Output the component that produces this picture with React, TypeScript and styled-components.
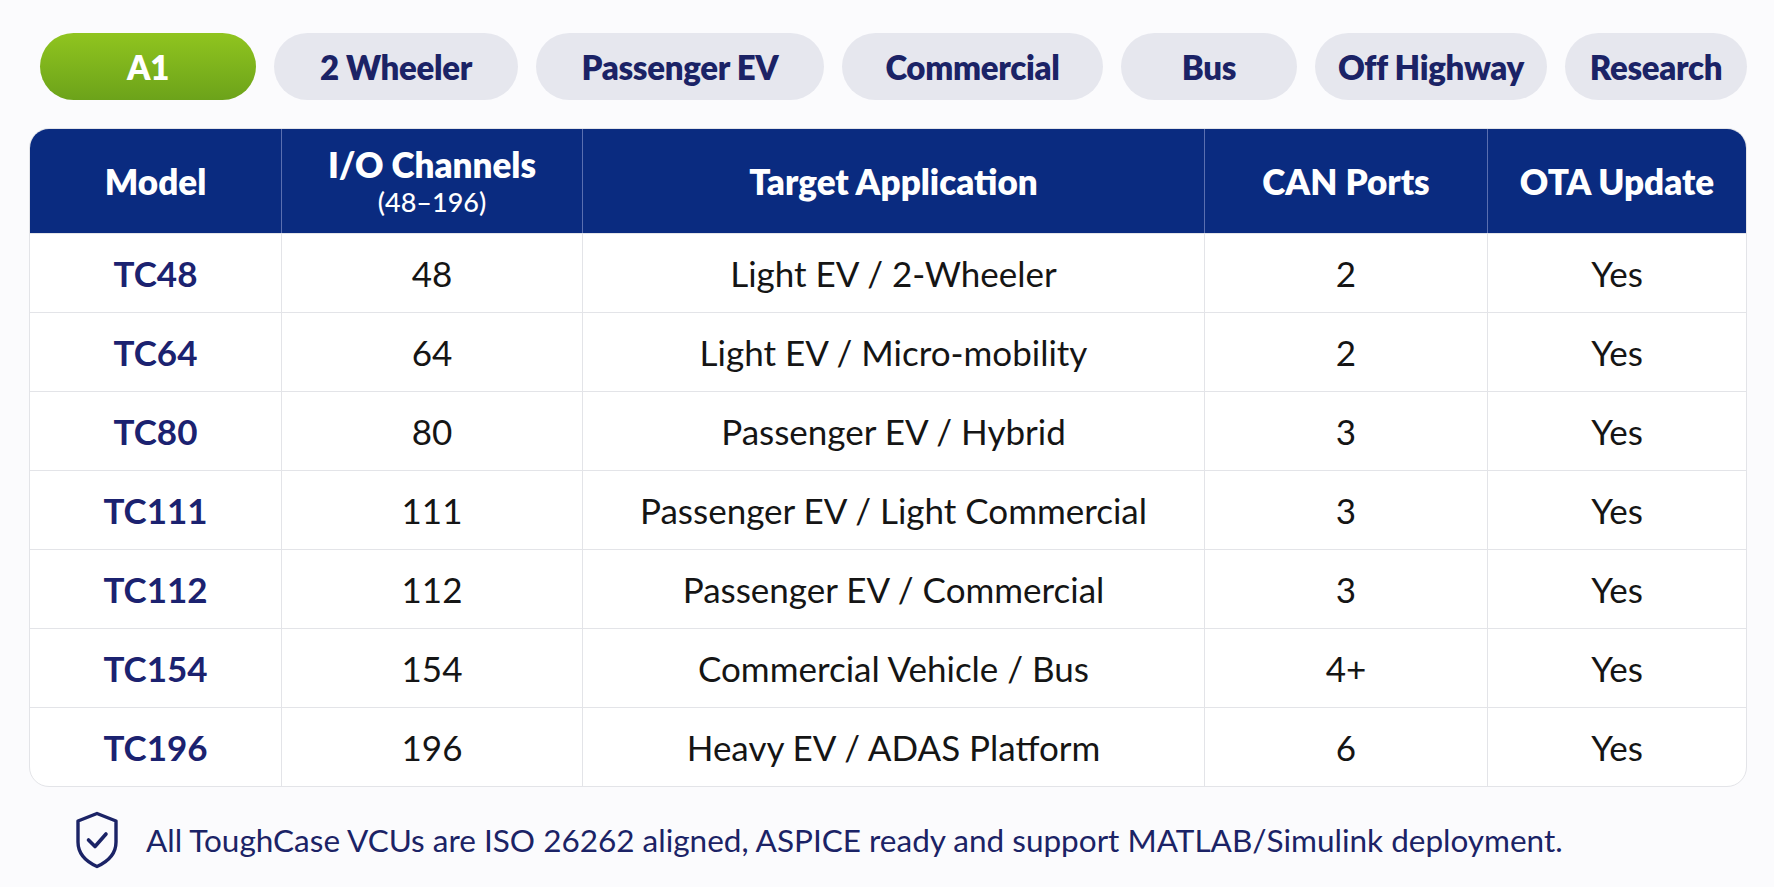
import styled, { createGlobalStyle } from 'styled-components';

const GlobalStyle = createGlobalStyle`
  html, body {
    margin: 0;
    padding: 0;
    background: #fbfbfd;
  }
  body {
    font-family: Lato, 'Open Sans', sans-serif;
    color: #151515;
  }
`;

const Page = styled.div`
  width: 1774px;
  height: 887px;
  box-sizing: border-box;
  padding: 33px 0 0 29px;
`;

const Tabs = styled.div`
  display: flex;
  gap: 18px;
  padding-left: 11px;
`;

const Tab = styled.button<{ $active?: boolean; $w: number }>`
  width: ${(p) => p.$w}px;
  height: 67px;
  border: none;
  border-radius: 34px;
  padding: 0;
  font-family: Lato, sans-serif;
  font-weight: 800;
  font-size: 33px;
  letter-spacing: -0.3px;
  cursor: pointer;
  color: ${(p) => (p.$active ? '#ffffff' : '#1b2366')};
  background: ${(p) =>
    p.$active ? 'linear-gradient(180deg, #90c41f 0%, #6ca31a 100%)' : '#e6e7ee'};
`;

const Table = styled.div`
  margin-top: 28px;
  width: 1716px;
  border: 1px solid #e3e4e8;
  border-radius: 20px;
  overflow: hidden;
  background: #ffffff;
  display: grid;
  grid-template-columns: 251px 301px 622px 283px 1fr;
`;

const HeadCell = styled.div`
  background: #0a2b80;
  color: #ffffff;
  height: 104px;
  display: flex;
  flex-direction: column;
  align-items: center;
  justify-content: center;
  font-weight: 800;
  font-size: 35px;
  line-height: 1.1;
  border-left: 1px solid #5a6fb0;
  &:first-child {
    border-left: none;
  }
`;

const SubHead = styled.span`
  font-weight: 500;
  font-size: 27px;
  margin-top: 4px;
`;

const Cell = styled.div<{ $model?: boolean; $first?: boolean }>`
  height: 78px;
  display: flex;
  align-items: center;
  justify-content: center;
  font-size: 35px;
  font-weight: ${(p) => (p.$model ? 700 : 400)};
  color: ${(p) => (p.$model ? '#1b2270' : '#151515')};
  border-top: 1px solid #e3e4e8;
  border-left: ${(p) => (p.$first ? 'none' : '1px solid #e3e4e8')};
`;

const Note = styled.div`
  display: flex;
  align-items: center;
  gap: 27px;
  margin: 24px 0 0 46px;
  font-size: 31.5px;
  color: #1b2366;
`;

const tabs = [
  { label: 'A1', w: 216, active: true },
  { label: '2 Wheeler', w: 244 },
  { label: 'Passenger EV', w: 288 },
  { label: 'Commercial', w: 261 },
  { label: 'Bus', w: 176 },
  { label: 'Off Highway', w: 232 },
  { label: 'Research', w: 182 },
];

const rows = [
  ['TC48', '48', 'Light EV / 2-Wheeler', '2', 'Yes'],
  ['TC64', '64', 'Light EV / Micro-mobility', '2', 'Yes'],
  ['TC80', '80', 'Passenger EV / Hybrid', '3', 'Yes'],
  ['TC111', '111', 'Passenger EV / Light Commercial', '3', 'Yes'],
  ['TC112', '112', 'Passenger EV / Commercial', '3', 'Yes'],
  ['TC154', '154', 'Commercial Vehicle / Bus', '4+', 'Yes'],
  ['TC196', '196', 'Heavy EV / ADAS Platform', '6', 'Yes'],
];

function ShieldIcon() {
  return (
    <svg width="44" height="58" viewBox="0 0 44 58" fill="none">
      <path
        d="M22 2.5 L41 10 V31 C41 43 32 51 22 55.5 C12 51 3 43 3 31 V10 Z"
        stroke="#1b2366"
        strokeWidth="3.4"
        strokeLinejoin="round"
      />
      <path
        d="M13.5 29 L20 35.5 L31 23"
        stroke="#1b2366"
        strokeWidth="3.6"
        strokeLinecap="round"
        strokeLinejoin="round"
      />
    </svg>
  );
}

export default function App() {
  return (
    <>
      <GlobalStyle />
      <Page>
        <Tabs>
          {tabs.map((t) => (
            <Tab key={t.label} $w={t.w} $active={t.active}>
              {t.label}
            </Tab>
          ))}
        </Tabs>
        <Table>
          <HeadCell>Model</HeadCell>
          <HeadCell>
            I/O Channels
            <SubHead>(48–196)</SubHead>
          </HeadCell>
          <HeadCell>Target Application</HeadCell>
          <HeadCell>CAN Ports</HeadCell>
          <HeadCell>OTA Update</HeadCell>
          {rows.map((r) =>
            r.map((v, i) => (
              <Cell key={r[0] + i} $model={i === 0} $first={i === 0}>
                {v}
              </Cell>
            ))
          )}
        </Table>
        <Note>
          <ShieldIcon />
          All ToughCase VCUs are ISO 26262 aligned, ASPICE ready and support MATLAB/Simulink deployment.
        </Note>
      </Page>
    </>
  );
}
